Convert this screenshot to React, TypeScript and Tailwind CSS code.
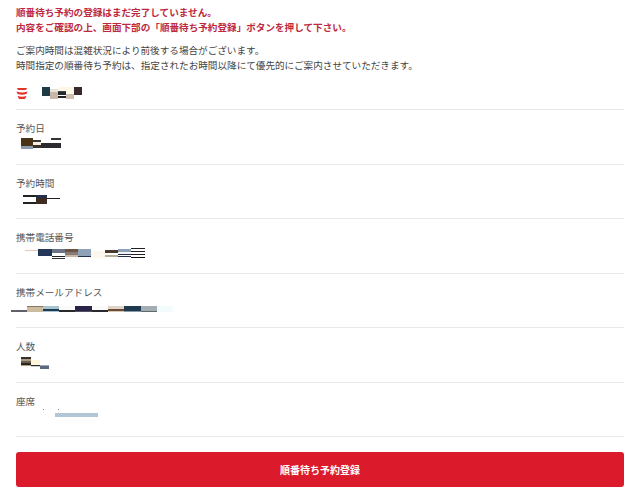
import React from "react";

// one strip of a censored block: [height in px, class with colour]
type Col = { w: string; top: string; cells: string[] };

function Mosaic({ cols, className = "" }: { cols: Col[]; className?: string }) {
  return (
    <div className={`flex items-start ${className}`}>
      {cols.map((c, i) => (
        <div key={i} className={`flex flex-col ${c.w} ${c.top}`}>
          {c.cells.map((cell, j) => (
            <div key={j} className={cell} />
          ))}
        </div>
      ))}
    </div>
  );
}

const shop: Col[] = [
  { w: "w-[8px]", top: "mt-0", cells: ["h-[9px] bg-[#1e3a44]"] },
  { w: "w-[8px]", top: "mt-[2px]", cells: ["h-[3px] bg-[#e6e2da]", "h-[7px] bg-[#c9b6a6]"] },
  { w: "w-[8px]", top: "mt-0", cells: ["h-[4px] bg-[#fdf8e6]", "h-[1px] bg-[#444444]", "h-[3px] bg-[#1f2a2e]", "h-[1px] bg-[#ffffff]", "h-[2px] bg-[#222222]"] },
  { w: "w-[8px]", top: "mt-0", cells: ["h-[7px] bg-[#fdf8e6]", "h-[5px] bg-[#cdbfb2]"] },
  { w: "w-[8px]", top: "mt-0", cells: ["h-[8px] bg-[#3a282c]"] },
];

const date: Col[] = [
  { w: "w-[12px]", top: "mt-0", cells: ["h-[8px] bg-[#4a3214]", "h-[3px] bg-[#8c9ab0]"] },
  { w: "w-[8px]", top: "mt-[2px]", cells: ["h-[2px] bg-[#3a3a3a]", "h-[3px] bg-[#f4efe0]", "h-[3px] bg-[#3a3228]"] },
  { w: "w-[10px]", top: "mt-[5px]", cells: ["h-[5px] bg-[#2c2c30]"] },
  { w: "w-[10px]", top: "mt-0", cells: ["h-[2px] bg-[#333333]", "h-[3px] bg-[#ffffff]", "h-[5px] bg-[#2c2c30]"] },
];

const time: Col[] = [
  { w: "w-[13px]", top: "mt-0", cells: ["h-[2px] bg-[#222222]", "h-[5px] bg-[#ffffff]", "h-[2px] bg-[#222222]"] },
  { w: "w-[11px]", top: "mt-0", cells: ["h-[3px] bg-[#22304a]", "h-[6px] bg-[#3e2c22]"] },
  { w: "w-[13px]", top: "mt-[3px]", cells: ["h-[1px] bg-[#222222]"] },
];

const phone: Col[] = [
  { w: "w-[13px]", top: "mt-[2px]", cells: ["h-[1px] bg-[#e8c8b4]"] },
  { w: "w-[14px]", top: "mt-[1px]", cells: ["h-[7px] bg-[#24365a]"] },
  { w: "w-[13px]", top: "mt-[1px]", cells: ["h-[4px] bg-[#6c7486]", "h-[3px] bg-[#ffffff]", "h-[1px] bg-[#222222]", "h-[1px] bg-[#ffffff]", "h-[1px] bg-[#333333]"] },
  { w: "w-[13px]", top: "mt-[1px]", cells: ["h-[3px] bg-[#6a5244]", "h-[3px] bg-[#8a7a74]", "h-[2px] bg-[#c9b6a6]"] },
  { w: "w-[13px]", top: "mt-[1px]", cells: ["h-[7px] bg-[#8ea3b8]", "h-[1px] bg-[#24344a]"] },
  { w: "w-[14px]", top: "mt-[3px]", cells: ["h-[7px] bg-[#fdf8ee]"] },
  { w: "w-[13px]", top: "mt-[2px]", cells: ["h-[3px] bg-[#4a382c]", "h-[2px] bg-[#ffffff]", "h-[2px] bg-[#b8ae96]"] },
  { w: "w-[13px]", top: "mt-[1px]", cells: ["h-[3px] bg-[#8ea3b8]", "h-[2px] bg-[#f4f4f4]", "h-[1px] bg-[#22304a]", "h-[1px] bg-[#ffffff]", "h-[1px] bg-[#22304a]"] },
  { w: "w-[14px]", top: "mt-0", cells: ["h-[1px] bg-[#222222]", "h-[2px] bg-[#ffffff]", "h-[1px] bg-[#222222]", "h-[2px] bg-[#ffffff]", "h-[1px] bg-[#222222]", "h-[2px] bg-[#ffffff]", "h-[1px] bg-[#111111]"] },
];

const mail: Col[] = [
  { w: "w-[16px]", top: "mt-[4px]", cells: ["h-[2px] bg-[#60606a]"] },
  { w: "w-[16px]", top: "mt-0", cells: ["h-[1px] bg-[#8a7660]", "h-[5px] bg-[#cdbb9e]"] },
  { w: "w-[16px]", top: "mt-0", cells: ["h-[3px] bg-[#a8c4d0]", "h-[2px] bg-[#1e3a50]", "h-[1px] bg-[#a8c4d0]"] },
  { w: "w-[16px]", top: "mt-0", cells: ["h-[4px] bg-[#fafafa]", "h-[2px] bg-[#2a2a2e]"] },
  { w: "w-[17px]", top: "mt-0", cells: ["h-[5px] bg-[#2a2348]", "h-[1px] bg-[#555060]"] },
  { w: "w-[16px]", top: "mt-0", cells: ["h-[4px] bg-[#fafafa]", "h-[2px] bg-[#2a2a2e]"] },
  { w: "w-[16px]", top: "mt-0", cells: ["h-[3px] bg-[#e0d4c6]", "h-[2px] bg-[#6e4a34]", "h-[1px] bg-[#d8c8b8]"] },
  { w: "w-[17px]", top: "mt-0", cells: ["h-[5px] bg-[#1e3a50]", "h-[1px] bg-[#8a9aa8]"] },
  { w: "w-[16px]", top: "mt-0", cells: ["h-[5px] bg-[#a4acb4]", "h-[1px] bg-[#606870]"] },
  { w: "w-[16px]", top: "mt-0", cells: ["h-[6px] bg-[#f4fbfc]"] },
];

const people: Col[] = [
  { w: "w-[10px]", top: "mt-0", cells: ["h-[2px] bg-[#3a3228]", "h-[2px] bg-[#a89c84]", "h-[2px] bg-[#6a5e4c]", "h-[2px] bg-[#2a2620]", "h-[1px] bg-[#a89c84]"] },
  { w: "w-[9px]", top: "mt-[3px]", cells: ["h-[5px] bg-[#fdf6dc]", "h-[1px] bg-[#2a2e34]", "h-[1px] bg-[#c8ccd0]"] },
  { w: "w-[9px]", top: "mt-[8px]", cells: ["h-[1px] bg-[#a0a8b4]", "h-[3px] bg-[#5a6a80]"] },
];

const Section = ({ label, children }: { label: string; children: React.ReactNode }) => (
  <div className="h-[54.5px] border-b border-[#eaeaea] pt-[11px]">
    <p className="text-[9.6px] leading-[14px] text-[#555555]">{label}</p>
    {children}
  </div>
);

export default function App() {
  return (
    <div
      className="w-[640px] h-[492px] overflow-hidden bg-white pl-[16px] pr-[16px] pt-[5px]"
      style={{ fontFamily: '"Noto Sans CJK JP", "Noto Sans", sans-serif' }}
    >
      <div className="text-[9.6px] leading-[15px] font-bold text-[#bd2a3e] whitespace-nowrap">
        <p>順番待ち予約の登録はまだ完了していません。</p>
        <p>内容をご確認の上、画面下部の「順番待ち予約登録」ボタンを押して下さい。</p>
      </div>

      <div className="mt-[8px] text-[9.6px] leading-[14.5px] text-[#444444] whitespace-nowrap">
        <p>ご案内時間は混雑状況により前後する場合がございます。</p>
        <p>時間指定の順番待ち予約は、指定されたお時間以降にて優先的にご案内させていただきます。</p>
      </div>

      {/* Shop */}
      <div className="mt-[15px] h-[23px] flex items-start border-b border-[#e6e6e6]">
        <svg width="12" height="13" viewBox="0 0 12 13" className="shrink-0">
          <path d="M1 1 H11 L10 3 H2 Z" fill="#e5332a" />
          <path d="M0.5 4.5 Q6 6.5 11.5 4.5 L10.5 7 Q6 8.5 1.5 7 Z" fill="#e5332a" />
          <path d="M1.5 9 Q6 10.5 10.5 9 L9 12 H3 Z" fill="#e5332a" />
        </svg>
        <Mosaic cols={shop} className="ml-[14px]" />
      </div>

      <Section label="予約日">
        <Mosaic cols={date} className="ml-[5px] mt-[3px]" />
      </Section>
      <Section label="予約時間">
        <Mosaic cols={time} className="ml-[7px] mt-[5px]" />
      </Section>
      <Section label="携帯電話番号">
        <Mosaic cols={phone} className="ml-[9px] mt-[4px]" />
      </Section>
      <Section label="携帯メールアドレス">
        <Mosaic cols={mail} className="-ml-[5px] mt-[7px]" />
      </Section>
      <Section label="人数">
        <Mosaic cols={people} className="ml-[5px] mt-[4px]" />
      </Section>
      <Section label="座席">
        <div className="ml-[27px] mt-[1px] w-[16px] flex justify-between">
          <div className="w-px h-px bg-[#888888]" />
          <div className="w-px h-px bg-[#888888]" />
        </div>
        <div className="ml-[39px] mt-[3px] w-[43px] h-[4px] bg-[#b2c6d6]" />
      </Section>

      <button className="mt-[15px] w-[608px] h-[35px] rounded-[3px] bg-[#db1a2b] text-white text-[10px] font-bold flex items-center justify-center">
        順番待ち予約登録
      </button>
    </div>
  );
}
